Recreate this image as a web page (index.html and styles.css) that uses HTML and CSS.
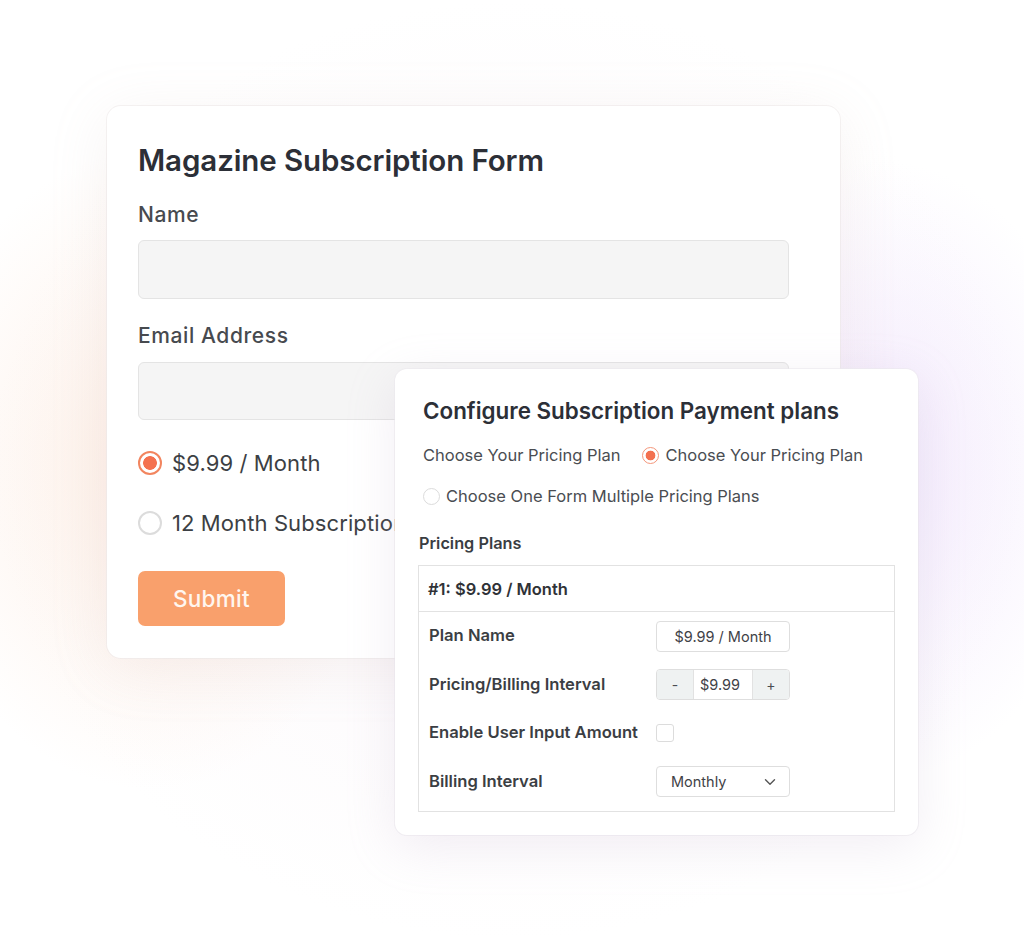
FILE: index.html
```html
<!DOCTYPE html>
<html lang="en">
<head>
<meta charset="utf-8">
<title>Magazine Subscription Form</title>
<link rel="stylesheet" href="styles.css">
</head>
<body>
<div class="stage">
  <section class="card form-card">
    <h1 class="form-title">Magazine Subscription Form</h1>
    <div class="field">
      <div class="field-label">Name</div>
      <div class="text-input"></div>
    </div>
    <div class="field">
      <div class="field-label">Email Address</div>
      <div class="text-input email"></div>
    </div>
    <div class="choice first">
      <span class="radio big on"></span>
      <span>$9.99 / Month</span>
    </div>
    <div class="choice">
      <span class="radio big"></span>
      <span>12 Month Subscription</span>
    </div>
    <div class="submit">Submit</div>
  </section>

  <section class="card config-card">
    <h2 class="config-title">Configure Subscription Payment plans</h2>
    <div class="plan-row one">
      <span>Choose Your Pricing Plan</span>
      <span class="opt"><span class="radio small on"></span><span>Choose Your Pricing Plan</span></span>
    </div>
    <div class="plan-row two">
      <span class="opt"><span class="radio small"></span><span>Choose One Form Multiple Pricing Plans</span></span>
    </div>
    <div class="plans-label">Pricing Plans</div>
    <div class="plans-box">
      <div class="plans-head">#1: $9.99 / Month</div>
      <div class="plans-body">
        <div class="row-label">Plan Name</div>
        <div class="ctrl box-input">$9.99 / Month</div>

        <div class="row-label">Pricing/Billing Interval</div>
        <div class="ctrl stepper">
          <span class="step">-</span>
          <span class="step-val">$9.99</span>
          <span class="step">+</span>
        </div>

        <div class="row-label">Enable User Input Amount</div>
        <div class="ctrl-check"><span class="checkbox"></span></div>

        <div class="row-label">Billing Interval</div>
        <div class="ctrl select">
          <span>Monthly</span>
          <svg class="chev" width="12" height="8" viewBox="0 0 12 8"><path d="M1.5 1.8 L6 6.2 L10.5 1.8" fill="none" stroke="#555" stroke-width="1.4" stroke-linecap="round" stroke-linejoin="round"/></svg>
        </div>
      </div>
    </div>
  </section>
</div>
</body>
</html>
```

FILE: styles.css
```css
* { box-sizing: border-box; }
html, body { margin: 0; padding: 0; }
body {
  font-family: Inter, "Noto Sans", "Liberation Sans", sans-serif;
  background: #ffffff;
}
.stage {
  position: relative;
  width: 1024px;
  height: 941px;
  overflow: hidden;
  padding: 106px 0 0 107px;
  background:
    radial-gradient(ellipse 240px 320px at 150px 470px, rgba(252, 224, 206, 0.5), rgba(252, 224, 206, 0) 100%),
    radial-gradient(ellipse 220px 310px at 880px 470px, rgba(234, 218, 252, 0.55), rgba(234, 218, 252, 0) 100%),
    radial-gradient(ellipse 520px 470px at 512px 470px, rgba(247, 240, 245, 0.55), rgba(247, 240, 245, 0) 100%),
    #ffffff;
}
.card {
  background: #ffffff;
  border-radius: 14px;
}
.form-card {
  width: 733px;
  height: 552px;
  padding: 36px 31px 0 31px;
  box-shadow: 0 10px 60px rgba(200, 170, 160, 0.14), 0 0 0 1px rgba(240, 236, 236, 0.6);
}
.form-title {
  margin: 0;
  font-size: 29.5px;
  line-height: 36px;
  font-weight: 600;
  color: #2c2f37;
  letter-spacing: -0.1px;
}
.field { margin-top: 25px; }
.field-label {
  font-size: 21px;
  line-height: 24px;
  font-weight: 500;
  color: #474a4f;
  letter-spacing: 0.6px;
}
.text-input {
  margin-top: 13px;
  width: 651px;
  height: 59px;
  background: #f5f5f5;
  border: 1px solid #e4e4e4;
  border-radius: 6px;
}
.text-input.email { margin-top: 14px; height: 58px; }
.choice {
  display: flex;
  align-items: center;
  gap: 10px;
  height: 32px;
  margin-top: 28px;
  font-size: 22px;
  color: #3c3f44;
  letter-spacing: 0.1px;
}
.choice.first { margin-top: 27px; }
.radio {
  display: inline-block;
  border-radius: 50%;
  border: 2px solid #dcdcdc;
  background: #fff;
  flex: none;
}
.radio.big { width: 24px; height: 24px; }
.radio.big.on {
  border-color: #f2855f;
  background: radial-gradient(circle, #f4714f 0 6.5px, #ffffff 7.2px);
}
.radio.small { width: 17px; height: 17px; border-width: 1.5px; }
.radio.small.on {
  border-color: #f4967a;
  background: radial-gradient(circle, #f3704f 0 4.5px, #ffffff 5.2px);
}
.submit {
  margin-top: 32px;
  width: 147px;
  height: 55px;
  border-radius: 7px;
  background: #f9a06c;
  color: #fff6ef;
  font-size: 22.5px;
  font-weight: 500;
  letter-spacing: 0.3px;
  display: flex;
  align-items: center;
  justify-content: center;
}

.config-card {
  position: absolute;
  left: 395px;
  top: 369px;
  width: 523px;
  height: 466px;
  border-radius: 12px;
  padding: 28px 23px 0 23px;
  box-shadow: 0 12px 50px rgba(190, 170, 200, 0.2), 0 0 0 1px rgba(238, 236, 240, 0.6);
}
.config-title {
  margin: 0 0 0 5px;
  font-size: 22.4px;
  line-height: 28px;
  font-weight: 600;
  color: #2c2f37;
}
.plan-row {
  display: flex;
  align-items: center;
  height: 24px;
  margin-left: 5px;
  font-size: 16.5px;
  color: #4a4d52;
}
.plan-row.one { margin-top: 18px; gap: 22px; }
.plan-row.two { margin-top: 17px; }
.opt { display: flex; align-items: center; gap: 6px; }
.plans-label {
  margin-top: 25px;
  margin-left: 1px;
  font-size: 16.3px;
  line-height: 20px;
  font-weight: 600;
  color: #3a3d42;
}
.plans-box {
  margin-top: 12px;
  width: 477px;
  border: 1px solid #e2e2e2;
}
.plans-head {
  height: 46px;
  display: flex;
  align-items: center;
  padding-left: 9px;
  border-bottom: 1px solid #e2e2e2;
  font-size: 16.5px;
  font-weight: 600;
  color: #2f3237;
}
.plans-body {
  display: grid;
  grid-template-columns: 227px 134px;
  grid-auto-rows: 30px;
  row-gap: 18.5px;
  align-items: center;
  padding: 9px 10px 14px 10px;
}
.row-label {
  font-size: 16.6px;
  font-weight: 600;
  color: #3b3e43;
  margin-top: -2px;
}
.ctrl {
  height: 31px;
  border: 1px solid #dedede;
  border-radius: 4px;
  background: #fff;
  font-size: 14.5px;
  color: #3f4247;
}
.box-input {
  display: flex;
  align-items: center;
  justify-content: center;
}
.stepper {
  display: flex;
  overflow: hidden;
}
.step {
  width: 36px;
  background: #eff2f2;
  display: flex;
  align-items: center;
  justify-content: center;
  font-size: 14px;
  color: #4a4d52;
}
.step-val {
  flex: 1;
  display: flex;
  align-items: center;
  padding-left: 6px;
  border-left: 1px solid #e2e2e2;
  border-right: 1px solid #e2e2e2;
}
.ctrl-check { display: flex; align-items: center; }
.checkbox {
  width: 18px;
  height: 18px;
  border: 1.5px solid #dcdcdc;
  border-radius: 3px;
  background: #fff;
}
.select {
  display: flex;
  align-items: center;
  justify-content: space-between;
  padding: 0 13px 0 14px;
}
.chev { display: block; }
```
